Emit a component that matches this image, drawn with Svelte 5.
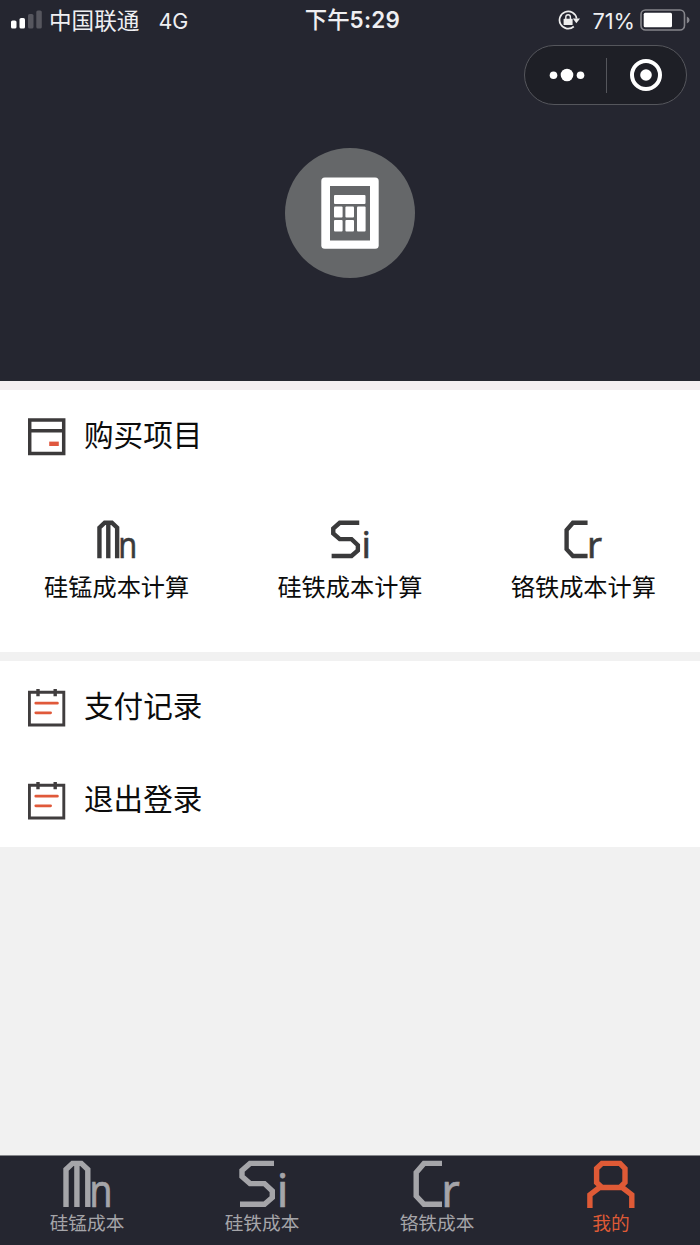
<script lang="ts">
    type Item = { icon: string; label: string };

    const products: Item[] = [
        { icon: 'mn', label: '硅锰成本计算' },
        { icon: 'si', label: '硅铁成本计算' },
        { icon: 'cr', label: '铬铁成本计算' },
    ];

    const links = ['支付记录', '退出登录'];

    const tabs: Item[] = [
        { icon: 'mn', label: '硅锰成本' },
        { icon: 'si', label: '硅铁成本' },
        { icon: 'cr', label: '铬铁成本' },
        { icon: 'me', label: '我的' },
    ];

    let active = $state('me');
</script>

{#snippet symbol(name: string)}
    <svg class="symbol" viewBox="0 0 48 48">
        {#if name === 'mn'}
            <path d="M3 47V9.5L9.5 3.4H18.3L24.8 9.5V47M13.9 3V47" />
            <text transform="translate(26.3 47) scale(0.84 1)">n</text>
        {:else if name === 'si'}
            <path d="M36 3.4H12L4 10.5V16.5L12 23.6H26.5L34.3 31V37.5L26.5 44.3H2" />
            <text x="38.7" y="47">i</text>
        {:else if name === 'cr'}
            <path d="M29 3.4H11L3.2 12.5V36L11 44.3H29" />
            <text x="28.2" y="47">r</text>
        {:else}
            <path d="M15 3.4H33L38 8.5V22.5L33 27.5H15L9.6 22.5V8.5ZM2.9 48V34.8L12.5 27.5M44.8 48V34.8L35.3 27.5" />
        {/if}
    </svg>
{/snippet}

<div class="page">
    <header>
        <div class="status">
            <div class="carrier">
                <svg width="32" height="20" viewBox="0 0 32 20">
                    <rect x="1" y="10.5" width="5.5" height="8" rx="1.6" fill="#fff" />
                    <rect x="9.5" y="8" width="5.5" height="10.5" rx="1.6" fill="#fff" />
                    <rect x="18" y="4" width="5.5" height="14.5" rx="1.6" fill="#56565e" />
                    <rect x="26.3" y="0.5" width="5.5" height="18" rx="1.6" fill="#56565e" />
                </svg>
                <span class="name">中国联通</span>
                <span>4G</span>
            </div>
            <div class="time">下午<b>5:29</b></div>
            <div class="power">
                <svg width="22" height="20" viewBox="0 0 22 20" fill="none" stroke="#eee" stroke-width="1.7">
                    <path d="M15.8 16.5A8.6 8.6 0 1 1 18.6 8.6" />
                    <path d="M14.8 8.6H22L18.4 13.2Z" fill="#eee" stroke="none" />
                    <rect x="5.6" y="8.8" width="9" height="6.2" rx="0.6" fill="#eee" stroke="none" />
                    <path d="M7.8 9V7A2.3 2.3 0 0 1 12.4 7V9" stroke-width="1.4" />
                </svg>
                <span class="percent">71%</span>
                <svg width="50" height="22" viewBox="0 0 50 22">
                    <rect x="1" y="1" width="43.5" height="20" rx="4.5" fill="none" stroke="#85858b" stroke-width="1.6" />
                    <rect x="3.7" y="3.8" width="28.3" height="14.5" rx="1.5" fill="#fff" />
                    <path d="M46.8 7.5Q49.6 8.5 49.6 11T46.8 14.5Z" fill="#85858b" />
                </svg>
            </div>
        </div>

        <div class="capsule">
            <svg width="36" height="16" viewBox="0 0 36 16" fill="#fff">
                <circle cx="4.5" cy="8.3" r="3.8" />
                <circle cx="18" cy="8" r="6.3" />
                <circle cx="31.5" cy="8.3" r="3.8" />
            </svg>
            <i></i>
            <svg width="34" height="34" viewBox="0 0 34 34">
                <circle cx="17" cy="17" r="14" fill="none" stroke="#fff" stroke-width="4" />
                <circle cx="17" cy="17" r="5.8" fill="#fff" />
            </svg>
        </div>

        <div class="avatar">
            <svg width="58" height="72" viewBox="0 0 58 72" fill="#fff">
                <rect x="0.3" y="0.5" width="57.4" height="71.2" rx="3.5" />
                <rect x="9" y="9" width="40" height="54.5" fill="#656769" />
                <rect x="13" y="18" width="31.5" height="9" rx="1" />
                <rect x="13" y="29.5" width="8.6" height="11" rx="1" />
                <rect x="24.4" y="29.5" width="8.6" height="11" rx="1" />
                <rect x="13" y="43" width="8.6" height="11.5" rx="1" />
                <rect x="24.4" y="43" width="8.6" height="11.5" rx="1" />
                <rect x="36" y="29.5" width="8.6" height="25" rx="1" />
            </svg>
        </div>
    </header>

    <section class="purchases">
        <div class="row">
            <svg width="38" height="38" viewBox="0 0 38 38" fill="none" stroke="#3c3a3b" stroke-width="3.5">
                <path d="M1.7 2H35.7V35.6H1.7ZM1.7 12.8H35.7" />
                <path d="M21.2 25.8H30.8" stroke="#e0583f" stroke-width="4.4" />
            </svg>
            <span>购买项目</span>
        </div>
        <div class="grid">
            {#each products as p (p.icon)}
                <div class="product">
                    {@render symbol(p.icon)}
                    <span>{p.label}</span>
                </div>
            {/each}
        </div>
    </section>

    <section class="links">
        {#each links as label}
            <div class="row">
                <svg width="38" height="38" viewBox="0 0 38 38" fill="none" stroke="#403d3e" stroke-width="2.9">
                    <path d="M1.4 3.2H35.8V36H1.4Z" />
                    <path d="M10 0V7.2M27.2 0V7.2" stroke-width="3.4" />
                    <path d="M7.8 14.2H29.4M7.8 23.8H22.6" stroke="#e0593a" stroke-linecap="round" stroke-width="2.8" />
                </svg>
                <span>{label}</span>
            </div>
        {/each}
    </section>

    <nav>
        {#each tabs as t (t.icon)}
            <button class:active={active === t.icon} onclick={() => { active = t.icon; }}>
                {@render symbol(t.icon)}
                <span>{t.label}</span>
            </button>
        {/each}
    </nav>
</div>

<style>
    :global(body) { margin: 0; }

    .page {
        display: flex; flex-direction: column; height: 1245px; width: 700px;
        background: #f1f1f1; color: #0c0c0c; overflow: hidden;
        font-family: "Noto Sans CJK SC", sans-serif;
    }

    header {
        box-sizing: border-box; height: 381px; flex: none;
        display: flex; flex-direction: column;
        background: #252630; color: #efeff2;
    }
    .status {
        display: grid; grid-template-columns: 1fr auto 1fr; align-items: center;
        height: 38px; padding: 0 10px; font-size: 22.6px; line-height: 38px;
    }
    .carrier, .power { display: flex; align-items: center; }
    .carrier { font-family: Inter, "Noto Sans CJK SC", sans-serif; font-size: 21.5px; }
    .carrier span { padding-top: 2px; }
    .carrier .name { font-size: 22.6px; margin: 0 19px 0 7px; }
    .time { font-family: Inter, "Noto Sans CJK SC", sans-serif; font-size: 22.4px; font-weight: 500; margin-left: 5px; }
    .time b { font-weight: 600; letter-spacing: 0.3px; }
    .power { justify-content: flex-end; font-family: Inter, sans-serif; font-size: 21.8px; }
    .percent { margin: 0 5px 0 12px; padding-top: 1px; }

    .capsule {
        box-sizing: border-box; align-self: flex-end;
        display: flex; align-items: center;
        width: 163px; height: 60px; margin: 7px 13px 0 0; padding-left: 24px;
        border: 1.5px solid #55565c; border-radius: 30px; background: #1e1f26;
    }
    .capsule i { width: 1px; height: 35px; margin: 0 22px 0 21px; background: #55565c; }

    .avatar {
        display: flex; align-items: center; justify-content: center; align-self: center;
        width: 130px; height: 130px; margin-top: 43px;
        border-radius: 50%; background: #656769;
    }

    section { background: #fff; flex: none; }
    .row {
        display: flex; align-items: center; gap: 18px;
        height: 93px; padding-left: 28px; font-size: 29.6px;
    }
    .row span { line-height: 40px; margin-top: -5px; }

    .purchases { height: 262px; margin-top: 9px; box-shadow: 0 -9px #f4eef1; }
    .grid { display: grid; grid-template-columns: repeat(3, 1fr); padding-top: 37px; }
    .product { display: flex; flex-direction: column; align-items: center; font-size: 24.2px; }
    .product span { line-height: 34px; margin-top: 10px; }
    .product .symbol { width: 39px; height: 39px; color: #3a3a3b; }

    .links { margin-top: 9px; }

    .symbol { display: block; fill: none; stroke: currentColor; stroke-width: 5.4; overflow: visible; }
    .symbol text { font: 45px "Noto Sans", sans-serif; fill: currentColor; stroke-width: 0.7; }

    nav {
        display: grid; grid-template-columns: repeat(4, 1fr);
        box-sizing: border-box; height: 90px; margin-top: auto;
        background: #252630; border-top: 1px solid #85868a;
    }
    nav button {
        display: flex; flex-direction: column; align-items: center;
        border: 0; padding: 4px 1px 0 0; background: none; color: #a5a5a9;
        font: 18.7px/26px "Noto Sans CJK SC", sans-serif;
    }
    nav button:last-child { padding-right: 3px; }
    nav button.active { color: #df5a36; }
    nav .symbol { width: 48px; height: 48px; flex: none; }
    nav span { margin-top: 1px; }
</style>
